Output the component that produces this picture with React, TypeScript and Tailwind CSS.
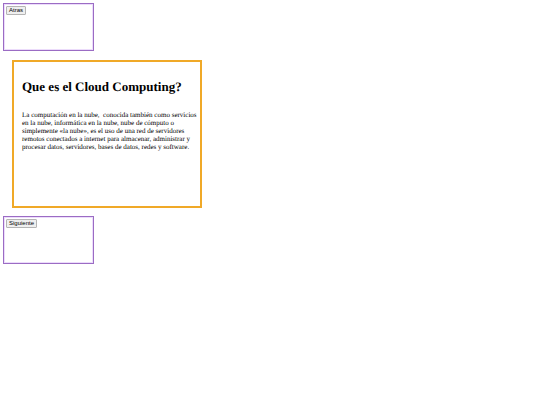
import type { ReactNode } from "react";

function NavBox({ children }: { children: ReactNode }) {
  return (
    <div className="h-12 w-[91px] border border-[#9b6cc4] bg-white p-[2px] ring-1 ring-inset ring-[#ecdcfb]">
      {children}
    </div>
  );
}

function NavButton({ label }: { label: string }) {
  return (
    <button
      type="button"
      className="block h-[9px] rounded-[1px] border border-[#b4b4b4] bg-[#efefef] px-[2px] font-['Liberation_Sans',Arial,sans-serif] text-[6px] leading-[7px] text-black"
    >
      {label}
    </button>
  );
}

export default function App() {
  return (
    <main className="p-[3px] font-['Liberation_Serif','Times_New_Roman',serif] text-black [text-rendering:geometricPrecision]">
      <NavBox>
        <NavButton label="Atras" />
      </NavBox>

      <section className="mx-[9px] mt-[9px] mb-2 h-[148px] w-[190px] border-2 border-[#f0a928] px-2 py-[17px]">
        <h1 className="mb-4 whitespace-nowrap text-[13px] font-bold leading-4">
          Que es el Cloud Computing?
        </h1>
        <p className="whitespace-nowrap text-[7px] leading-[8px]">
          La computación en la nube,&nbsp; conocida también como servicios
          <br />
          en la nube, informática en la nube, nube de cómputo o
          <br />
          simplemente «la nube», es el uso de una red de servidores
          <br />
          remotos conectados a internet para almacenar, administrar y
          <br />
          procesar datos, servidores, bases de datos, redes y software.
        </p>
      </section>

      <NavBox>
        <NavButton label="Siguiente" />
      </NavBox>
    </main>
  );
}
